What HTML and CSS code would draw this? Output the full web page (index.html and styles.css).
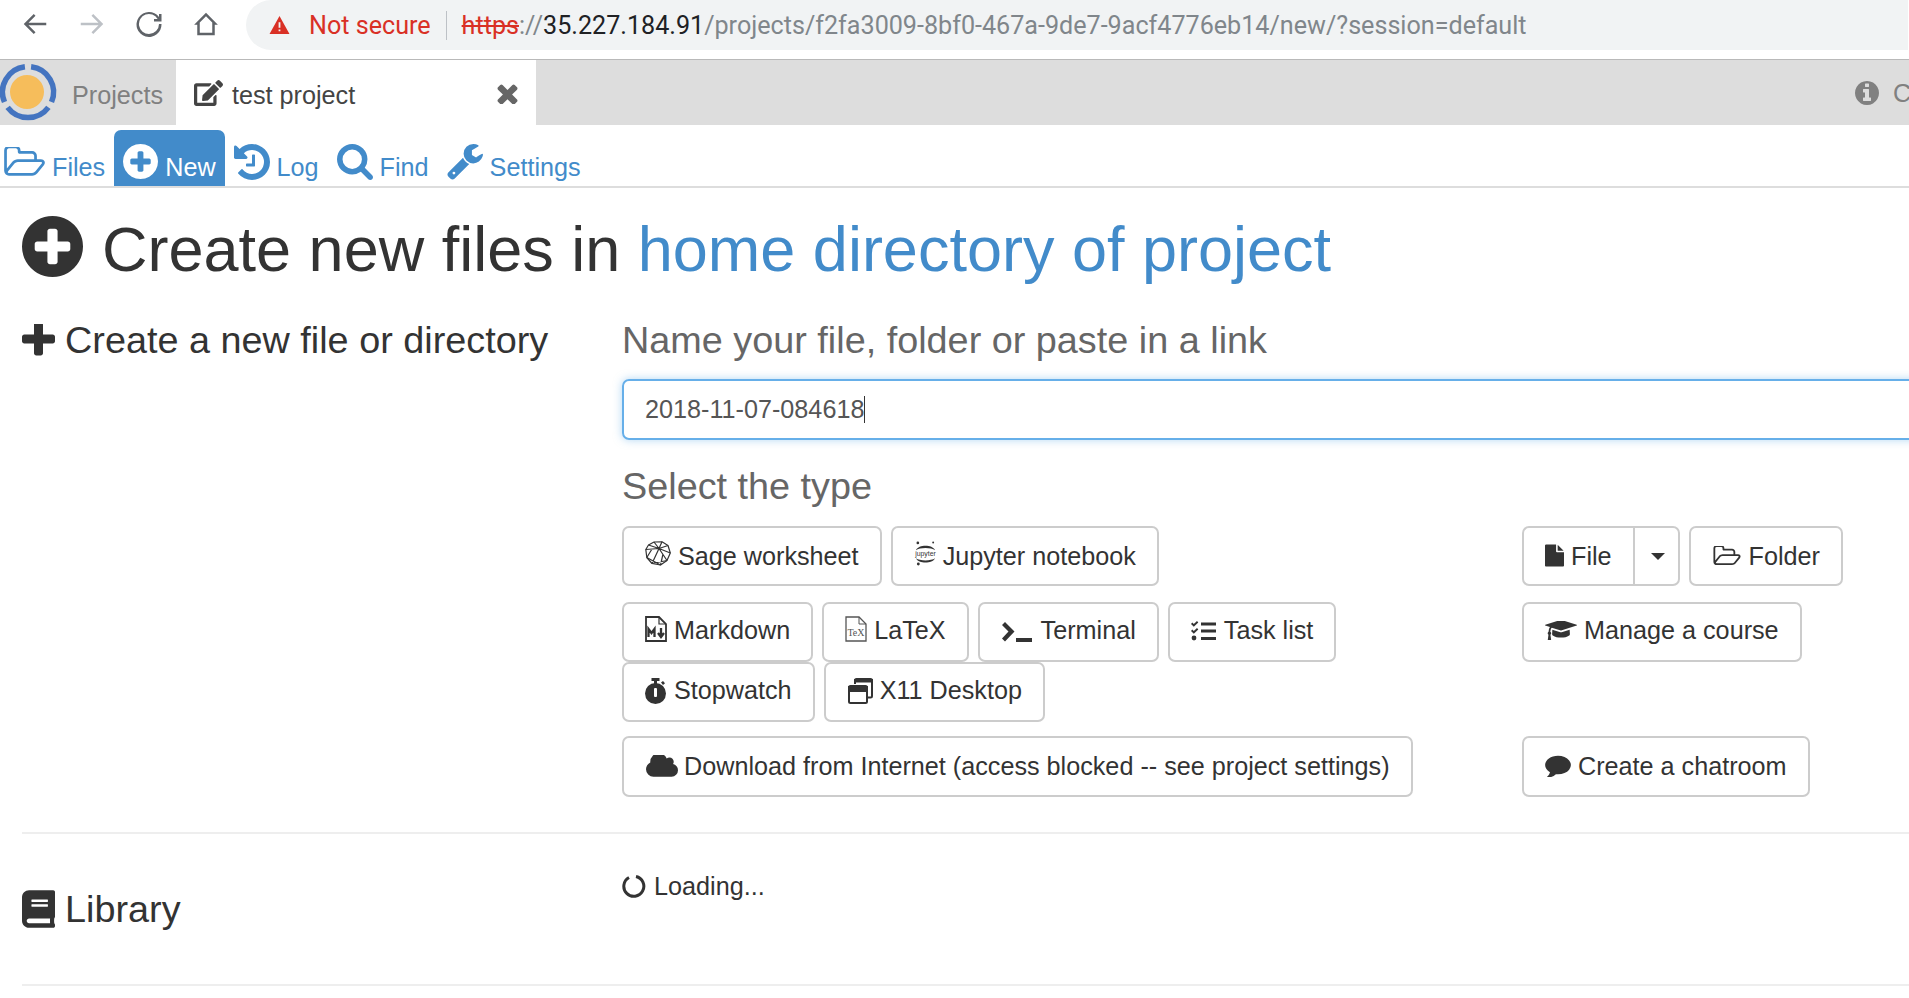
FILE: index.html
```html
<!DOCTYPE html>
<html lang="en">
<head>
    <meta charset="UTF-8">
    <title>test project - New</title>
    <link rel="stylesheet" href="styles.css">
</head>
<body>
    <svg class="sprite" xmlns="http://www.w3.org/2000/svg">
        <symbol id="i-plus-circle" viewBox="128 128 1536 1536"><path d="M1344 960v-128q0-26-19-45t-45-19h-256v-256q0-26-19-45t-45-19h-128q-26 0-45 19t-19 45v256h-256q-26 0-45 19t-19 45v128q0 26 19 45t45 19h256v256q0 26 19 45t45 19h128q26 0 45-19t19-45v-256h256q26 0 45-19t19-45zm320-64q0 209-103 385.5t-279.5 279.5-385.5 103-385.5-103-279.5-279.5-103-385.5 103-385.5 279.5-279.5 385.5-103 385.5 103 279.5 279.5 103 385.5z"/></symbol>
        <symbol id="i-plus" viewBox="192 192 1408 1408"><path d="M1600 736v192q0 40-28 68t-68 28h-416v416q0 40-28 68t-68 28h-192q-40 0-68-28t-28-68v-416h-416q-40 0-68-28t-28-68v-192q0-40 28-68t68-28h416v-416q0-40 28-68t68-28h192q40 0 68 28t28 68v416h416q40 0 68 28t28 68z"/></symbol>
        <symbol id="i-folder" viewBox="0 192 1909 1408"><path d="M1781 931q0-35-53-35h-1088q-40 0-85.500 21.500t-71.500 52.500l-294 363q-18 24-18 40 0 35 53 35h1088q40 0 86-22t71-53l294-363q18-22 18-39zm-1141-163h768v-160q0-40-28-68t-68-28h-576q-40 0-68-28t-28-68v-64q0-40-28-68t-68-28h-320q-40 0-68 28t-28 68v853l256-315q44-53 116-87.500t140-34.500zm1269 163q0 62-46 120l-295 363q-43 53-116 87.500t-140 34.500h-1088q-92 0-158-66t-66-158v-960q0-92 66-158t158-66h320q92 0 158 66t66 158v32h544q92 0 158 66t66 158v160h192q54 0 99 24.500t67 70.500q15 32 15 68z"/></symbol>
        <symbol id="i-history" viewBox="128 128 1536 1536"><path d="M1664 896q0 156-61 298t-164 245-245 164-298 61q-172 0-327-72.500t-264-204.500q-7-10-6.500-22.500t8.500-20.500l137-138q10-9 25-9 16 2 23 12 73 95 179 147t225 52q104 0 198.500-40.500t163.500-109.500 109.500-163.500 40.500-198.500-40.500-198.500-109.500-163.500-163.500-109.500-198.500-40.500q-98 0-188 35.500t-160 101.500l137 138q31 30 14 69-17 40-59 40h-448q-26 0-45-19t-19-45v-448q0-42 40-59 39-17 69 14l130 129q107-101 244.500-156.500t284.500-55.500q156 0 298 61t245 164 164 245 61 298zm-640-288v448q0 14-9 23t-23 9h-320q-14 0-23-9t-9-23v-64q0-14 9-23t23-9h224v-352q0-14 9-23t23-9h64q14 0 23 9t9 23z"/></symbol>
        <symbol id="i-search" viewBox="64 128 1664 1664"><path d="M1216 832q0-185-131.500-316.500t-316.500-131.500-316.500 131.500-131.500 316.500 131.500 316.500 316.500 131.500 316.500-131.500 131.500-316.500zm512 832q0 52-38 90t-90 38q-54 0-90-38l-343-342q-179 124-399 124-143 0-273.500-55.500t-225-150-150-225-55.500-273.500 55.500-273.500 150-225 225-150 273.500-55.500 273.500 55.500 225 150 150 225 55.500 273.500q0 220-124 399l343 343q37 37 37 90z"/></symbol>
        <symbol id="i-wrench" viewBox="64 128 1664 1664"><path d="M448 1472q0-26-19-45t-45-19-45 19-19 45 19 45 45 19 45-19 19-45zm644-420l-682 682q-37 37-90 37-52 0-91-37l-106-108q-38-36-38-90 0-53 38-91l681-681q39 98 114.500 173.500t173.500 114.500zm634-435q0 39-23 106-47 134-164.500 217.500t-258.500 83.500q-185 0-316.500-131.500t-131.500-316.500 131.500-316.500 316.500-131.500q58 0 121.500 16.500t107.500 46.500q16 11 16 28t-16 28l-293 169v224l193 107q5-3 79-48.500t135.500-81 70.500-35.500q15 0 23.500 10t8.500 25z"/></symbol>
        <symbol id="i-edit" viewBox="0 0 576 512"><path d="M402.600 83.200l90.200 90.200c3.800 3.800 3.800 10 0 13.800L274.400 405.600l-92.800 10.300c-12.400 1.400-22.900-9.100-21.500-21.500l10.300-92.800L388.800 83.200c3.800-3.800 10-3.800 13.800 0zm162-22.900l-48.800-48.800c-15.200-15.200-39.900-15.200-55.200 0l-35.400 35.400c-3.800 3.800-3.800 10 0 13.800l90.200 90.200c3.800 3.800 10 3.800 13.800 0l35.400-35.400c15.200-15.300 15.200-40 0-55.200zM384 346.200V448H64V128h229.800c3.200 0 6.200-1.300 8.500-3.500l40-40c7.600-7.600 2.200-20.500-8.500-20.500H48C21.500 64 0 85.500 0 112v352c0 26.500 21.500 48 48 48h352c26.500 0 48-21.500 48-48V306.200c0-10.700-12.900-16-20.500-8.500l-40 40c-2.200 2.300-3.500 5.300-3.500 8.500z"/></symbol>
        <symbol id="i-times" viewBox="272 272 1248 1248"><path d="M1490 1322q0 40-28 68l-136 136q-28 28-68 28t-68-28l-294-294-294 294q-28 28-68 28t-68-28l-136-136q-28-28-28-68t28-68l294-294-294-294q-28-28-28-68t28-68l136-136q28-28 68-28t68 28l294 294 294-294q28-28 68-28t68 28l136 136q28 28 28 68t-28 68l-294 294 294 294q28 28 28 68z"/></symbol>
        <symbol id="i-info" viewBox="128 128 1536 1536"><path d="M1152 1376v-160q0-14-9-23t-23-9h-96v-512q0-14-9-23t-23-9h-320q-14 0-23 9t-9 23v160q0 14 9 23t23 9h96v320h-96q-14 0-23 9t-9 23v160q0 14 9 23t23 9h448q14 0 23-9t9-23zm-128-896v-160q0-14-9-23t-23-9h-192q-14 0-23 9t-9 23v160q0 14 9 23t23 9h192q14 0 23-9t9-23zm640 416q0 209-103 385.500t-279.500 279.500-385.500 103-385.500-103-279.500-279.500-103-385.500 103-385.500 279.500-279.500 385.500-103 385.500 103 279.500 279.500 103 385.500z"/></symbol>
        <symbol id="i-file" viewBox="128 0 1536 1792"><path d="M1152 512v-472q22 14 36 28l408 408q14 14 28 36h-472zm-128 32q0 40 28 68t68 28h544v1056q0 40-28 68t-68 28h-1344q-40 0-68-28t-28-68v-1600q0-40 28-68t68-28h800v544z"/></symbol>
        <symbol id="i-cap" viewBox="0 256 2304 1280"><path d="M1774 836l18 316q4 69-82 128t-235 93.500-323 34.500-323-34.500-235-93.500-82-128l18-316 574 181q22 7 48 7t48-7zm530-324q0 23-22 31l-1120 352q-4 1-10 1t-10-1l-652-206q-43 34-71 111.500t-34 178.500q63 36 63 109 0 69-58 107l58 433q2 14-8 25-9 11-24 11h-192q-15 0-24-11-10-11-8-25l58-433q-58-38-58-107 0-73 65-111 11-207 98-330l-333-104q-22-8-22-31t22-31l1120-352q4-1 10-1t10 1l1120 352q22 8 22 31z"/></symbol>
        <symbol id="i-comment" viewBox="0 128 1792 1600"><path d="M1792 896q0 174-120 321.500t-326 233-450 85.500q-70 0-145-8-198 175-460 242-49 14-114 22-17 2-30.500-9t-17.500-29v-1q-3-4-.5-12t2-10 4.500-9.500l6-9 7-8.500 8-9q7-8 31-34.500t34.500-38 31-39.500 32.500-51 27-59 26-76q-157-89-247.500-220t-90.500-281q0-130 71-248.500t191-204.500 286-136.500 348-50.500q244 0 450 85.500t326 233 120 321.500z"/></symbol>
        <symbol id="i-cloud" viewBox="0 256 1920 1280"><path d="M1920 1152q0 159-112.500 271.500t-271.500 112.500h-1088q-185 0-316.500-131.500t-131.500-316.500q0-132 71-241.500t187-163.500q-2-28-2-43 0-212 150-362t362-150q158 0 286.500 88t187.500 230q70-62 166-62 106 0 181 75t75 181q0 75-41 138 129 30 213 134.500t84 239.500z"/></symbol>
        <symbol id="i-book" viewBox="0 0 448 512"><path d="M448 360V24c0-13.300-10.700-24-24-24H96C43 0 0 43 0 96v320c0 53 43 96 96 96h328c13.300 0 24-10.700 24-24v-16c0-7.500-3.500-14.300-8.900-18.700-4.200-15.400-4.200-59.300 0-74.700 5.400-4.300 8.900-11.100 8.900-18.600zM128 134c0-3.300 2.700-6 6-6h212c3.300 0 6 2.700 6 6v20c0 3.300-2.700 6-6 6H134c-3.300 0-6-2.700-6-6v-20zm0 64c0-3.300 2.700-6 6-6h212c3.300 0 6 2.700 6 6v20c0 3.300-2.700 6-6 6H134c-3.300 0-6-2.700-6-6v-20zm253.400 250H96c-17.700 0-32-14.300-32-32 0-17.600 14.400-32 32-32h285.400c-1.900 17.100-1.900 46.900 0 64z"/></symbol>
    </svg>

    <!-- barre du navigateur -->
    <div class="browser-bar">
        <svg class="nav-arrow" viewBox="0 0 24 24"><path d="M21 11H6.800l5.600-5.600L11 4l-8 8 8 8 1.400-1.400L6.800 13H21z"/></svg>
        <svg class="nav-arrow off" viewBox="0 0 24 24"><path d="M3 11h14.200l-5.600-5.600L13 4l8 8-8 8-1.400-1.400 5.600-5.600H3z"/></svg>
        <svg class="nav-arrow" viewBox="0 0 24 24"><path d="M12 20a8 8 0 1 1 6.900-12H16v2h6V4h-2v2.400A10 10 0 1 0 22 12h-2a8 8 0 0 1-8 8z"/></svg>
        <svg class="nav-arrow" viewBox="0 0 24 24"><path d="M12 3 2.500 12.500H5V21h14v-8.500h2.500zm5 16H7v-8.300l5-5 5 5z"/></svg>
        <div class="omnibox">
            <svg class="warn" viewBox="0 0 24 22"><path d="M12 1 1 21h22zm1 17h-2v-2h2zm0-4h-2V8h2z"/></svg>
            <span class="not-secure">Not secure</span>
            <span class="omni-sep"></span>
            <span class="url"><s>https</s><span class="url-dim">://</span><span class="url-host">35.227.184.91</span><span class="url-dim">/projects/f2fa3009-8bf0-467a-9de7-9acf4776eb14/new/?session=default</span></span>
        </div>
    </div>

    <!-- onglets -->
    <div class="top-tabs">
        <svg class="logo" viewBox="0 0 60 65">
            <circle cx="27" cy="32" r="17" fill="#f6bd5b"/>
            <g fill="none" stroke="#4474c0" stroke-width="5.500">
                <path d="M4.500 42A25.500 25.500 0 0 1 24.900 6.700"/>
                <path d="M31.100 6.700A25.500 25.500 0 0 1 51.500 42"/>
                <path d="M48.400 47.300A25.500 25.500 0 0 1 7.600 47.300"/>
            </g>
        </svg>
        <div class="tab-projects">Projects</div>
        <div class="tab-active">
            <svg class="ic"><use href="#i-edit"/></svg>
            <span>test project</span>
            <svg class="tab-close"><use href="#i-times"/></svg>
        </div>
        <div class="top-right">
            <svg class="ic-info"><use href="#i-info"/></svg>
            <span>C</span>
        </div>
    </div>

    <!-- sous-onglets du projet -->
    <div class="sub-tabs">
        <a class="sub-tab"><svg class="ic-folder"><use href="#i-folder"/></svg>Files</a>
        <a class="sub-tab active"><svg class="ic-new"><use href="#i-plus-circle"/></svg>New</a>
        <a class="sub-tab"><svg class="ic-log"><use href="#i-history"/></svg>Log</a>
        <a class="sub-tab"><svg class="ic-log"><use href="#i-search"/></svg>Find</a>
        <a class="sub-tab"><svg class="ic-log"><use href="#i-wrench"/></svg>Settings</a>
    </div>

    <div class="page">
        <h1 class="title"><svg class="ic-title"><use href="#i-plus-circle"/></svg>Create new files in <a>home directory of project</a></h1>

        <div class="section">
            <h2 class="section-name"><svg class="ic-plus"><use href="#i-plus"/></svg>Create a new file or directory</h2>
            <div class="section-body">
                <h3 class="label">Name your file, folder or paste in a link</h3>
                <div class="name-input"><span>2018-11-07-084618</span><i class="caret-bar"></i></div>
                <h3 class="label label-type">Select the type</h3>

                <div class="type-row row-first">
                    <div class="btns">
                        <button class="btn">
                            <svg class="btn-ic ic-sage" viewBox="0 0 26 25" fill="none" stroke="#333" stroke-width="1.200" stroke-linejoin="round">
                                <path d="M9 1 17 .8 23 4.500 25.300 12 22 19.500 15.500 24 7 22.500 1.800 16.500.8 8.500 3.500 4z"/>
                                <path d="M3.500 4 14 7.500 23 4.500M9 1l5 6.500L17 .8M14 7.500 7 22.500M14 7.500 22 19.500M14 7.500.8 8.500M14 7.500 25.300 12M1.800 16.500 7 8M7 22.500 22 19.500M1.800 16.500 15.500 24M18 13 15.500 24"/>
                            </svg>
                            Sage worksheet</button>
                        <button class="btn">
                            <svg class="btn-ic ic-jup" viewBox="0 0 24 26">
                                <path d="M2 9.500C5 3.500 19 3.500 22 9.500 18 6.500 6 6.500 2 9.500zM2 18c4 3 16 3 20 0-3 6-17 6-20 0z" fill="#333"/>
                                <circle cx="4" cy="2" r="1.400" fill="#333"/><circle cx="20" cy="1.500" r="1" fill="#333"/><circle cx="4.500" cy="24" r="1.500" fill="#333"/>
                                <text x="12" y="15.500" class="jup-text">jupyter</text>
                            </svg>
                            Jupyter notebook</button>
                    </div>
                    <div class="btns btns-side">
                        <div class="btn-group">
                            <button class="btn"><svg class="btn-ic ic-file"><use href="#i-file"/></svg>File</button>
                            <button class="btn btn-caret"><i class="caret"></i></button>
                        </div>
                        <button class="btn"><svg class="btn-ic ic-btn-folder"><use href="#i-folder"/></svg>Folder</button>
                    </div>
                </div>

                <div class="type-row row-second">
                    <div class="btns btns-wrap">
                        <button class="btn">
                            <svg class="btn-ic ic-doc" viewBox="0 0 22 26">
                                <path d="M1 1h13l7 7v17H1z" fill="none" stroke="#333" stroke-width="1.800"/><path d="M14 1v7h7" fill="none" stroke="#333" stroke-width="1.200"/>
                                <path d="M3.500 21v-8l3 4 3-4v8M16 12v8M13 17l3 4 3-4" fill="none" stroke="#333" stroke-width="2.300"/>
                            </svg>
                            Markdown</button>
                        <button class="btn">
                            <svg class="btn-ic ic-doc" viewBox="0 0 22 26">
                                <path d="M1 1h13l7 7v17H1z" fill="none" stroke="#555" stroke-width="1.300"/><path d="M14 1v7h7" fill="none" stroke="#555" stroke-width="1"/>
                                <text x="11" y="20" class="tex-text">TeX</text>
                            </svg>
                            LaTeX</button>
                        <button class="btn">
                            <svg class="btn-ic ic-term" viewBox="0 0 30 20" fill="#333"><path d="M0 3 3 0 12.500 9.500 3 19.500 0 16.500 6.500 9.500z"/><rect x="14" y="16" width="16" height="4"/></svg>
                            Terminal</button>
                        <button class="btn">
                            <svg class="btn-ic ic-tasks" viewBox="0 0 25 20" fill="#333">
                                <path d="M0 3 1.300 1.500 2.800 3 6 0 7.300 1.400 2.800 5.800zM0 10 1.300 8.500 2.800 10 6 7 7.300 8.400 2.800 12.800z"/>
                                <circle cx="3" cy="17" r="2.400"/>
                                <rect x="10" y="1.500" width="15" height="3"/><rect x="10" y="8.500" width="15" height="3"/><rect x="10" y="16" width="15" height="3"/>
                            </svg>
                            Task list</button>
                        <button class="btn">
                            <svg class="btn-ic ic-watch" viewBox="0 0 21 26" fill="#333"><rect x="6.500" y="0" width="8" height="3"/><rect x="9" y="2" width="3" height="4"/><path d="M16 4.500 18 3l2 2.300-2 1.700z"/><circle cx="10.500" cy="15.500" r="10.500"/><rect x="9" y="10" width="3" height="9" rx="1" fill="#fff"/></svg>
                            Stopwatch</button>
                        <button class="btn">
                            <svg class="btn-ic ic-x11" viewBox="0 0 25 26" fill="none" stroke="#333" stroke-width="2"><path d="M7 6V2.500q0-1.500 1.500-1.500h14q1.500 0 1.500 1.500V18q0 1.500-1.500 1.500H19"/><rect x="1" y="8" width="18" height="17" rx="1.500"/><path d="M1 9h18v4H1z" fill="#333"/><path d="M7 2h17v1.500H7z" fill="#333"/></svg>
                            X11 Desktop</button>
                    </div>
                    <div class="btns btns-side">
                        <button class="btn"><svg class="btn-ic ic-cap"><use href="#i-cap"/></svg>Manage a course</button>
                    </div>
                </div>

                <div class="type-row row-third">
                    <div class="btns">
                        <button class="btn btn-tall"><svg class="btn-ic ic-cloud"><use href="#i-cloud"/></svg>Download from Internet (access blocked -- see project settings)</button>
                    </div>
                    <div class="btns btns-side">
                        <button class="btn btn-tall"><svg class="btn-ic ic-comment"><use href="#i-comment"/></svg>Create a chatroom</button>
                    </div>
                </div>
            </div>
        </div>

        <div class="section section-library">
            <h2 class="section-name"><svg class="ic-book"><use href="#i-book"/></svg>Library</h2>
            <div class="section-body loading">
                <svg class="spinner" viewBox="0 0 24 24" fill="none" stroke="#333" stroke-width="3"><path d="M14 2.500A10 10 0 1 1 7 3.500"/></svg>
                Loading...
            </div>
        </div>
    </div>
</body>
</html>
```

FILE: styles.css
```css
html, body {
    margin: 0;
    padding: 0;
    height: 100%;
    overflow: hidden;
    background: #fff;
}

body {
    font-family: "Liberation Sans", Arial, sans-serif;
    color: #333;
}

.sprite {
    display: none;
}

svg {
    display: block;
    flex: none;
}

use {
    fill: currentColor;
}

/* Barre du navigateur */
.browser-bar {
    height: 59px;
    border-bottom: 1px solid #b9b9b9;
    display: flex;
    align-items: flex-start;
    padding-left: 20px;
    font-family: Roboto, sans-serif;
}

.nav-arrow {
    width: 30px;
    height: 30px;
    margin: 9px 27px 0 0;
    fill: #5f6368;
}

.nav-arrow.off {
    fill: #bdc1c6;
}

.omnibox {
    margin-left: -2px;
    flex: 1;
    height: 50px;
    margin-right: 1px;
    background: #f1f3f4;
    border-radius: 25px 0 0 25px;
    display: flex;
    align-items: center;
    font-size: 25.140px;
    padding-left: 22px;
    white-space: nowrap;
}

.warn {
    width: 23px;
    height: 20px;
    fill: #d93025;
    margin-right: 18px;
}

.not-secure {
    color: #d93025;
}

.omni-sep {
    width: 1px;
    height: 29px;
    background: #bdc1c6;
    margin: 0 15px;
}

.url s {
    color: #d93025;
}

.url-dim {
    color: #80868b;
}

.url-host {
    color: #202124;
}

/* Onglets */
.top-tabs {
    height: 65px;
    background: #ddd;
    display: flex;
    align-items: center;
    font-size: 25.200px;
    overflow: hidden;
}

.logo {
    width: 60px;
    height: 65px;
}

.tab-projects {
    width: 116px;
    padding: 5px 0 0 12px;
    box-sizing: border-box;
    color: #808080;
}

.tab-active {
    width: 360px;
    height: 65px;
    background: #fff;
    display: flex;
    align-items: center;
    padding: 5px 18px 0 18px;
    box-sizing: border-box;
    color: #444;
}

.tab-active .ic {
    width: 29px;
    height: 26px;
    margin: -5px 9px 0 0;
}

.tab-close {
    margin: -3px 0 0 auto;
    width: 21px;
    height: 21px;
    color: #666;
}

.top-right {
    margin-left: auto;
    display: flex;
    align-items: center;
    width: 54px;
    flex: none;
    overflow: hidden;
    color: #808080;
    white-space: nowrap;
    padding-top: 1px;
}

.ic-info {
    width: 24px;
    height: 24px;
    margin-right: 14px;
    color: #808080;
}

/* Sous-onglets */
.sub-tabs {
    height: 61px;
    border-bottom: 2px solid #ddd;
    display: flex;
    align-items: flex-end;
    padding-left: 4px;
    font-size: 25.200px;
    color: #428bca;
}

.sub-tab {
    height: 56px;
    box-sizing: border-box;
    display: flex;
    align-items: flex-end;
    padding: 0 9px 4px;
    line-height: 30px;
}

.sub-tab svg {
    margin-right: 7px;
    align-self: flex-start;
}

.sub-tab:first-child {
    padding-left: 0;
    padding-right: 9px;
}

.sub-tab.active {
    background: #428bca;
    color: #fff;
    border-radius: 7px 7px 0 0;
}

.ic-folder {
    width: 41px;
    height: 30px;
    margin-top: 17px;
}

.ic-new {
    width: 35px;
    height: 35px;
    margin-top: 14px;
}

.ic-log {
    width: 36px;
    height: 36px;
    margin-top: 14px;
}

/* Contenu */
.page {
    width: 2300px;
    padding-left: 22px;
}

.title {
    margin: 0;
    height: 102px;
    padding-top: 10px;
    display: flex;
    align-items: center;
    font-size: 63px;
    font-weight: 400;
    white-space: pre;
    line-height: 1;
}

.title a {
    color: #428bca;
}

.ic-title {
    width: 61px;
    height: 61px;
    margin: -5px 19px 0 0;
}

.section {
    display: flex;
    border-bottom: 2px solid #eee;
}

.section-name {
    width: 600px;
    flex: none;
    margin: 16px 0 0;
    font-size: 37.800px;
    font-weight: 400;
    display: flex;
    align-items: center;
    height: 48px;
}

.ic-plus {
    width: 33px;
    height: 33px;
    margin-right: 10px;
}

.section-body {
    flex: 1;
    padding-bottom: 35px;
}

.label {
    margin: 0;
    font-size: 37.800px;
    font-weight: 400;
    color: #666;
    line-height: 40px;
    padding-top: 20px;
}

.name-input {
    margin-top: 19px;
    width: 1500px;
    height: 61px;
    box-sizing: border-box;
    border: 2px solid #66afe9;
    border-radius: 7px;
    box-shadow: 0 0 8px rgba(102, 175, 233, 0.5);
    padding-left: 21px;
    display: flex;
    align-items: center;
    font-size: 25.200px;
    color: #555;
}

.caret-bar {
    width: 1px;
    height: 27px;
    background: #333;
}

.label-type {
    padding-top: 26px;
}

.type-row {
    display: grid;
    grid-template-columns: 900px 1fr;
}

.row-first {
    margin-top: 20px;
}

.row-second {
    margin-top: 16px;
}

.row-second .btn {
    padding-bottom: 3px;
}

.row-third {
    margin-top: 14px;
}

.btns {
    display: flex;
    gap: 9px;
    align-items: flex-start;
}

.btns-wrap {
    flex-wrap: wrap;
    width: 740px;
    gap: 0 9px;
}

.btn {
    height: 60px;
    box-sizing: border-box;
    border: 2px solid #ccc;
    border-radius: 7px;
    background: #fff;
    color: #333;
    font: 25.200px "Liberation Sans", Arial, sans-serif;
    padding: 0 21px;
    display: inline-flex;
    align-items: center;
    white-space: nowrap;
}

.btn-tall {
    height: 61px;
    padding-bottom: 1px;
}

.btn-group {
    display: flex;
}

.btn-group .btn:first-child {
    border-radius: 7px 0 0 7px;
    border-right: 0;
}

.btn-caret {
    border-radius: 0 7px 7px 0;
    padding: 0 12px 0 16px;
    width: 47px;
}

.caret {
    border-top: 7px solid #333;
    border-left: 7px solid transparent;
    border-right: 7px solid transparent;
}

.btn-ic {
    margin-right: 5px;
}

.ic-sage {
    width: 26px;
    height: 25px;
    margin: -6px 7px 0 0;
}

.ic-jup {
    width: 23px;
    height: 25px;
    margin: -6px 6px 0 0;
}

.jup-text {
    font-size: 7.200px;
    fill: #333;
    text-anchor: middle;
    font-family: "Liberation Sans", sans-serif;
}

.ic-file {
    width: 19px;
    height: 25px;
    margin: -2px 7px 0 0;
}

.ic-btn-folder {
    width: 28px;
    height: 20px;
    margin: 0 8px 0 1px;
}

.ic-doc {
    width: 22px;
    height: 26px;
    margin: -3px 7px 0 0;
}

.tex-text {
    font-family: "Liberation Serif", serif;
    font-size: 10px;
    fill: #555;
    text-anchor: middle;
}

.ic-term {
    width: 30px;
    height: 20px;
    margin: 2px 9px 0 1px;
}

.ic-tasks {
    width: 25px;
    height: 20px;
    margin: 0 8px 0 0;
}

.ic-watch {
    width: 21px;
    height: 26px;
    margin: 0 8px 0 0;
}

.ic-x11 {
    width: 25px;
    height: 26px;
    margin: 0 7px 0 1px;
}

.ic-cap {
    width: 32px;
    height: 19px;
    margin: -1px 7px 0 0;
}

.ic-cloud {
    width: 32px;
    height: 22px;
    margin: -1px 6px 0 1px;
}

.ic-comment {
    width: 26px;
    height: 23px;
    margin: -2px 7px 0 0;
}

.section-library {
    height: 150px;
}

.section-library .section-name {
    margin-top: 51px;
}

.ic-book {
    width: 33px;
    height: 38px;
    margin-right: 10px;
}

.loading {
    display: flex;
    align-items: center;
    align-self: flex-start;
    font-size: 25.200px;
    margin-top: 37px;
    padding: 0;
    line-height: 30px;
}

.spinner {
    width: 24px;
    height: 24px;
    margin-right: 8px;
}
```
